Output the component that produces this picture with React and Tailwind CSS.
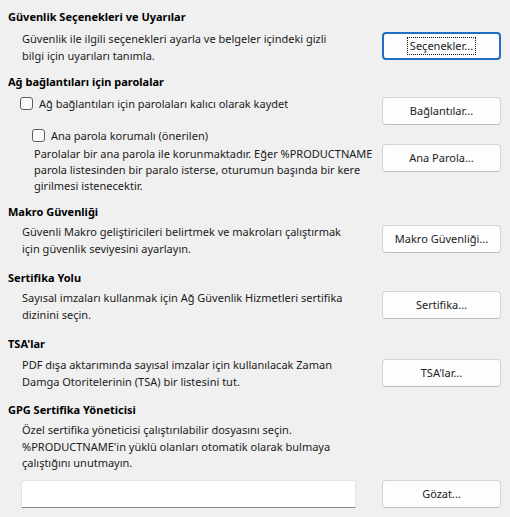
const font = { fontFamily: '"Noto Sans", "Liberation Sans", sans-serif' };

function Btn({ label, focused, className = "" }) {
  return (
    <div
      className={
        "w-[119px] h-[28px] shrink-0 flex items-center justify-center rounded-[4px] bg-[#fdfdfd] text-[11px] text-[#1b1b1b] " +
        (focused
          ? "border-2 border-[#1f6fc5] "
          : "border border-[#d3d3d3] border-b-[#bdbdbd] ") +
        className
      }
    >
      {focused ? (
        <span className="px-[2px] leading-[16px] outline outline-1 outline-dotted outline-[#111]">{label}</span>
      ) : (
        label
      )}
    </div>
  );
}

function Heading({ children, className = "" }) {
  return <div className={"text-[11px] leading-[17px] font-bold text-black whitespace-nowrap " + className}>{children}</div>;
}

function Desc({ children, className = "" }) {
  return <div className={"flex-1 min-w-0 text-[11px] text-[#1b1b1b] whitespace-nowrap " + className}>{children}</div>;
}

function Check({ label, className = "" }) {
  return (
    <div className={"flex items-center gap-[6px] h-[13px] " + className}>
      <span className="w-[13px] h-[13px] shrink-0 rounded-[3px] border border-[#5d5d5d] bg-[#fbfbfb]" />
      <span className="text-[11px] text-[#1b1b1b] leading-[13px] whitespace-nowrap">{label}</span>
    </div>
  );
}

export default function App() {
  return (
    <div className="w-[510px] h-[517px] bg-[#f0f0f0] overflow-hidden pl-[8px] pr-[9px] pt-[8px]" style={font}>
      {/* Güvenlik Seçenekleri */}
      <Heading>Güvenlik Seçenekleri ve Uyarılar</Heading>
      <div className="flex items-start mt-[6px]">
        <Desc className="pl-[14px] leading-[16.5px]">
          Güvenlik ile ilgili seçenekleri ayarla ve belgeler içindeki gizli
          <br />
          bilgi için uyarıları tanımla.
        </Desc>
        <Btn label="Seçenekler..." focused className="mt-[1px]" />
      </div>

      {/* Parolalar */}
      <Heading className="mt-[9px]">Ağ bağlantıları için parolalar</Heading>
      <div className="flex items-start mt-[7px]">
        <div className="flex-1 min-w-0 pl-[12px]">
          <Check label="Ağ bağlantıları için parolaları kalıcı olarak kaydet" />
        </div>
        <Btn label="Bağlantılar..." />
      </div>
      <div className="pl-[24px] mt-[4px]">
        <Check label="Ana parola korumalı (önerilen)" />
      </div>
      <div className="flex items-start mt-[2px]">
        <Desc className="pl-[26px] pt-[2px] leading-[16px]">
          Parolalar bir ana parola ile korunmaktadır. Eğer %PRODUCTNAME
          <br />
          parola listesinden bir paralo isterse, oturumun başında bir kere
          <br />
          girilmesi istenecektir.
        </Desc>
        <Btn label="Ana Parola..." />
      </div>

      {/* Makro */}
      <Heading className="mt-[9px]">Makro Güvenliği</Heading>
      <div className="flex items-start mt-[4px]">
        <Desc className="pl-[14px] leading-[16.5px]">
          Güvenli Makro geliştiricileri belirtmek ve makroları çalıştırmak
          <br />
          için güvenlik seviyesini ayarlayın.
        </Desc>
        <Btn label="Makro Güvenliği..." className="mt-[1px]" />
      </div>

      {/* Sertifika */}
      <Heading className="mt-[12px]">Sertifika Yolu</Heading>
      <div className="flex items-start mt-[4px]">
        <Desc className="pl-[14px] leading-[16.5px]">
          Sayısal imzaları kullanmak için Ağ Güvenlik Hizmetleri sertifika
          <br />
          dizinini seçin.
        </Desc>
        <Btn label="Sertifika..." className="mt-[1px]" />
      </div>

      {/* TSA */}
      <Heading className="mt-[12px]">TSA'lar</Heading>
      <div className="flex items-start mt-[5px]">
        <Desc className="pl-[14px] leading-[16.5px]">
          PDF dışa aktarımında sayısal imzalar için kullanılacak Zaman
          <br />
          Damga Otoritelerinin (TSA) bir listesini tut.
        </Desc>
        <Btn label="TSA'lar..." className="mt-[2px]" />
      </div>

      {/* GPG */}
      <Heading className="mt-[11px]">GPG Sertifika Yöneticisi</Heading>
      <Desc className="pl-[14px] mt-[4px] leading-[16.5px]">
        Özel sertifika yöneticisi çalıştırılabilir dosyasını seçin.
        <br />
        %PRODUCTNAME'in yüklü olanları otomatik olarak bulmaya
        <br />
        çalıştığını unutmayın.
      </Desc>
      <div className="flex items-start mt-[8.5px]">
        <div className="pl-[13px] flex-1 min-w-0">
          <input
            type="text"
            className="block w-[335px] h-[28px] bg-white border border-[#e3e3e3] border-b-[#8a8a8a] rounded-t-[3px] outline-none px-2 text-[11px]"
          />
        </div>
        <Btn label="Gözat..." />
      </div>
    </div>
  );
}
